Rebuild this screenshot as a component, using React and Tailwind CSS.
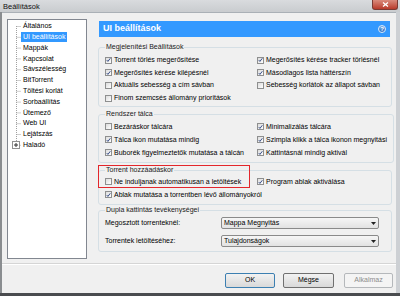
import React from 'react'

const TREE = [
  'Általános',
  'UI beállítások',
  'Mappák',
  'Kapcsolat',
  'Sávszélesség',
  'BitTorrent',
  'Töltési korlát',
  'Sorbaállítás',
  'Ütemező',
  'Web UI',
  'Lejátszás',
  'Haladó',
]

// kis Win7 stílusú jelölőnégyzet
function Box({ checked }) {
  return (
    <span className="w-[7px] h-[7px] border border-[#8e8f8f] bg-linear-to-br from-[#dcdcdc] to-white flex items-center justify-center shrink-0">
      {checked && (
        <svg width="6" height="6" viewBox="0 0 6 6">
          <path d="M0.9 3.1 L2.3 4.7 L5.2 0.9" stroke="#253d7c" strokeWidth="1.1" fill="none" />
        </svg>
      )}
    </span>
  )
}

function Check({ checked, children }) {
  return (
    <div className="flex items-center gap-[2px] h-full whitespace-nowrap">
      <Box checked={checked} />
      <span>{children}</span>
    </div>
  )
}

function Group({ title, className = '', children }) {
  return (
    <fieldset className={`border border-[#d5dfe5] rounded-[3px] px-[6px] ${className}`}>
      <legend className="px-[1px] leading-[8px] text-[#1a1a1a]">{title}</legend>
      {children}
    </fieldset>
  )
}

function Select({ value }) {
  return (
    <div className="w-[158px] h-[12px] border border-[#8a8a8a] rounded-[2px] bg-linear-to-b from-[#f6f6f6] to-[#e2e2e2] flex items-center justify-between px-[2px]">
      <span>{value}</span>
      <svg width="5" height="3" viewBox="0 0 5 3">
        <path d="M0 0 H5 L2.5 3 Z" fill="#222" />
      </svg>
    </div>
  )
}

function Button({ children, w, primary, disabled }) {
  const border = primary ? 'border-[#3c7fb1]' : disabled ? 'border-[#b5b8bb]' : 'border-[#707070]'
  const bg = disabled ? 'bg-[#f4f4f4] text-[#8c8c8c]' : 'bg-linear-to-b from-[#f2f2f2] to-[#d9d9d9]'
  return (
    <div className={`${w} h-[15px] border ${border} ${bg} rounded-[2px] flex items-center justify-center`}>
      {children}
    </div>
  )
}

export default function App() {
  return (
    <div className="w-[400px] h-[296px] flex flex-col bg-[#cdd0d4] font-['Liberation_Sans',Arial,sans-serif] text-[7px] text-black overflow-hidden">
      {/* címsor */}
      <div className="h-[12px] flex items-start justify-between shrink-0 bg-linear-to-b from-[#d9dbde] to-[#c9cccf]">
        <span className="text-[7.5px] ml-[3px] mt-[1px] text-[#111]">Beállítások</span>
        <div className="w-[26px] h-[10px] mr-[2px] rounded-b-[3px] border border-t-0 border-[#7a3a33] bg-linear-to-b from-[#d98a7c] to-[#b8392a] flex items-center justify-center">
          <svg width="7" height="5" viewBox="0 0 7 5">
            <path d="M1 0.5 L6 4.5 M6 0.5 L1 4.5" stroke="white" strokeWidth="1.3" />
          </svg>
        </div>
      </div>

      <div className="flex-1 flex">
        <div className="w-[2px] bg-[#8a8d90]" />
        <div className="w-[394px] bg-[#f0f0f0] flex flex-col border-t border-[#aab0b6]">
          <div className="flex pl-[5px] pt-[6px] h-[250px]">
            {/* fa nézet */}
            <div className="w-[80px] h-[240px] bg-white border border-[#828790] relative">
              <svg className="absolute left-0 top-0" width="20" height="140">
                <path d="M8.5 6 V125 M8.5 6.5 H13 M8.5 17.3 H13 M8.5 28.1 H13 M8.5 38.9 H13 M8.5 49.7 H13 M8.5 60.5 H13 M8.5 71.3 H13 M8.5 82.1 H13 M8.5 92.9 H13 M8.5 103.7 H13 M8.5 114.5 H13 M11.5 125.3 H13" stroke="#a0a0a0" strokeWidth="1" strokeDasharray="1 1" fill="none" />
                <rect x="4.5" y="121.5" width="7" height="7" fill="white" stroke="#919191" />
                <path d="M6 125 H10 M8 123 V127" stroke="#333" strokeWidth="1" />
              </svg>
              <div className="pt-[1px] pl-[13px] flex flex-col">
                {TREE.map((t, i) => (
                  <div key={t} className="h-[10.8px] flex items-center">
                    <span className={`px-[2px] h-[10px] flex items-center ${i === 1 ? 'bg-[#3399ff] text-white' : ''}`}>{t}</span>
                  </div>
                ))}
              </div>
            </div>

            {/* jobb oldali panel */}
            <div className="ml-[11px] w-[294px] pt-[2px] flex flex-col">
              <div className="ml-[1px] w-[291px] h-[16px] bg-[#3399ff] flex items-center justify-between px-[4px]">
                <span className="text-white font-bold text-[9px]">UI beállítások</span>
                <span className="w-[8px] h-[8px] rounded-full bg-linear-to-b from-[#6aa8e8] to-[#2f6fc0] border border-[#dbe8f7] text-white text-[6px] font-bold flex items-center justify-center">?</span>
              </div>

              <Group title="Megjelenítési Beállítások" className="mt-[6px] pt-[3px] pb-[2px]">
                <div className="grid grid-cols-[152px_1fr] auto-rows-[12.6px]">
                  <Check checked>Torrent törlés megerősítése</Check>
                  <Check checked>Megerősítés kérése tracker törlésnél</Check>
                  <Check checked>Megerősítés kérése kilépésnél</Check>
                  <Check checked>Másodlagos lista háttérszín</Check>
                  <Check>Aktuális sebesség a cím sávban</Check>
                  <Check>Sebesség korlátok az állapot sávban</Check>
                  <Check>Finom szemcsés állomány prioritások</Check>
                </div>
              </Group>

              <Group title="Rendszer tálca" className="mt-[3px] pt-[2px] pb-[3px]">
                <div className="grid grid-cols-[152px_1fr] auto-rows-[13px]">
                  <Check>Bezáráskor tálcára</Check>
                  <Check checked>Minimalizálás tálcára</Check>
                  <Check checked>Tálca ikon mutatása mindig</Check>
                  <Check checked>Szimpla klikk a tálca ikonon megnyitási</Check>
                  <Check checked>Buborék figyelmeztetők mutatása a tálcán</Check>
                  <Check checked>Kattintásnál mindig aktivál</Check>
                </div>
              </Group>

              <div className="relative">
                <Group title="Torrent hozzáadáskor" className="mt-[3px] pt-[1px] pb-[3px]">
                  <div className="grid grid-cols-[152px_1fr] auto-rows-[13px]">
                    <Check>Ne induljanak automatikusan a letöltések</Check>
                    <Check checked>Program ablak aktiválása</Check>
                    <div className="col-span-2">
                      <Check checked>Ablak mutatása a torrentben lévő állományokról</Check>
                    </div>
                  </div>
                </Group>
                <div className="absolute left-0 top-[2px] w-[152px] h-[23px] border border-[#e3262b]" />
              </div>

              <Group title="Dupla kattintás tevékenységei" className="mt-[1px] pt-[3px] pb-[4px]">
                <div className="flex flex-col gap-[6px]">
                  <div className="flex items-center">
                    <span className="w-[116px]">Megosztott torrenteknél:</span>
                    <Select value="Mappa Megnyitás" />
                  </div>
                  <div className="flex items-center">
                    <span className="w-[116px]">Torrentek letöltéséhez:</span>
                    <Select value="Tulajdonságok" />
                  </div>
                </div>
              </Group>
            </div>
          </div>

          <div className="h-[1px] bg-[#d5d5d5] border-b border-white box-content" />

          <div className="flex justify-end items-start pr-[3px] pt-[8px]">
            <Button w="w-[50px]" primary>OK</Button>
            <div className="w-[8px]" />
            <Button w="w-[51px]">Mégse</Button>
            <div className="w-[10px]" />
            <Button w="w-[49px]" disabled>Alkalmaz</Button>
          </div>
        </div>
        <div className="w-[4px] bg-[#cdd0d4]" />
      </div>
      <div className="h-[3px] bg-[#4a4c4f] shrink-0" />
    </div>
  )
}
